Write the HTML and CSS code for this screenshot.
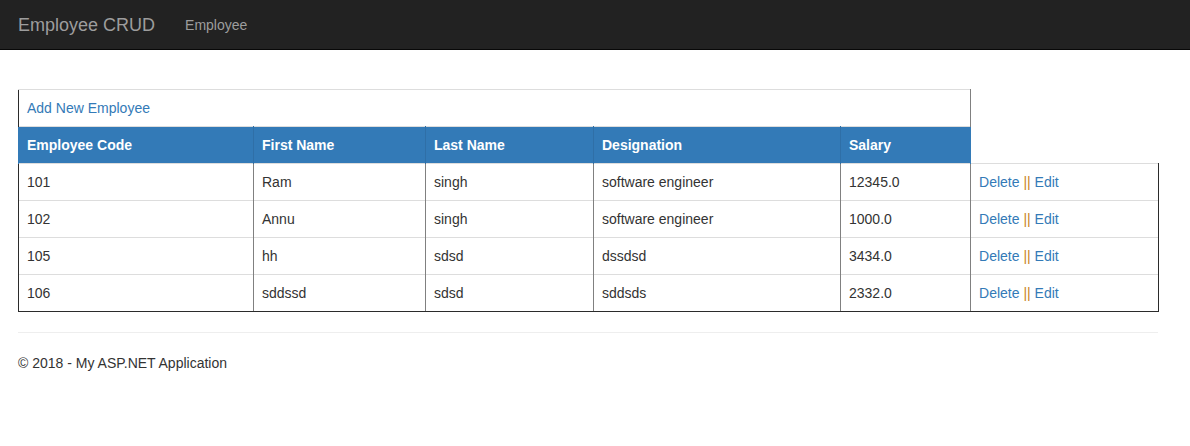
FILE: index.html
```html
<!DOCTYPE html>
<html>
<head>
<meta charset="utf-8">
<title>Employee CRUD</title>
<link rel="stylesheet" href="styles.css">
</head>
<body>
<nav class="navbar">
  <a class="brand" href="#">Employee CRUD</a>
  <a class="nav-link" href="#">Employee</a>
</nav>
<main class="content">
  <table class="grid">
    <colgroup>
      <col class="c1"><col class="c2"><col class="c3"><col class="c4"><col class="c5"><col class="c6">
    </colgroup>
    <tr class="add-row">
      <td colspan="5"><a class="link" href="#">Add New Employee</a></td>
    </tr>
    <tr class="head-row">
      <th>Employee Code</th>
      <th>First Name</th>
      <th>Last Name</th>
      <th>Designation</th>
      <th>Salary</th>
    </tr>
    <tr class="data-row">
      <td>101</td><td>Ram</td><td>singh</td><td>software engineer</td><td>12345.0</td>
      <td class="actions"><a class="link" href="#">Delete</a> <span class="sep">||</span> <a class="link" href="#">Edit</a></td>
    </tr>
    <tr class="data-row">
      <td>102</td><td>Annu</td><td>singh</td><td>software engineer</td><td>1000.0</td>
      <td class="actions"><a class="link" href="#">Delete</a> <span class="sep">||</span> <a class="link" href="#">Edit</a></td>
    </tr>
    <tr class="data-row">
      <td>105</td><td>hh</td><td>sdsd</td><td>dssdsd</td><td>3434.0</td>
      <td class="actions"><a class="link" href="#">Delete</a> <span class="sep">||</span> <a class="link" href="#">Edit</a></td>
    </tr>
    <tr class="data-row last">
      <td>106</td><td>sddssd</td><td>sdsd</td><td>sddsds</td><td>2332.0</td>
      <td class="actions"><a class="link" href="#">Delete</a> <span class="sep">||</span> <a class="link" href="#">Edit</a></td>
    </tr>
  </table>
  <hr class="rule">
  <footer class="footer">© 2018 - My ASP.NET Application</footer>
</main>
</body>
</html>
```
FILE: styles.css
```css
* { box-sizing: border-box; }
body {
  margin: 0;
  font-family: "Liberation Sans", Arial, sans-serif;
  font-size: 14px;
  line-height: 20px;
  color: #333;
  background: #fff;
}
.navbar {
  height: 50px;
  background: #222;
  border-bottom: 1px solid #080808;
  display: flex;
  align-items: center;
  padding-left: 18px;
}
.brand {
  color: #9d9d9d;
  font-size: 18px;
  text-decoration: none;
  line-height: 20px;
}
.nav-link {
  color: #9d9d9d;
  text-decoration: none;
  margin-left: 30px;
  line-height: 20px;
}
.content {
  margin-left: 18px;
  width: 1140px;
  padding-top: 39px;
}
.grid {
  border-collapse: collapse;
  width: 1140px;
  table-layout: fixed;
  margin-bottom: 20px;
}
.c1 { width: 235px; }
.c2 { width: 172px; }
.c3 { width: 168px; }
.c4 { width: 247px; }
.c5 { width: 130px; }
.c6 { width: 188px; }
.grid td, .grid th {
  padding: 8px;
  text-align: left;
  line-height: 20px;
  vertical-align: top;
  white-space: nowrap;
}
.link { color: #337ab7; text-decoration: none; }
.add-row td {
  border-top: 1px solid #ddd;
  border-left: 1px solid #2b2b2b;
  border-right: 1px solid #808080;
}
.head-row th {
  background: #337ab7;
  color: #fff;
  font-weight: bold;
  border-top: 1px solid #ddd;
  border-left: 1px solid #2f6fa7;
  border-right: 1px solid #2f6fa7;
}
.head-row th:first-child { border-left: 1px solid #337ab7; }
.head-row th:last-child { border-right: 1px solid #337ab7; }
.data-row td {
  border-top: 1px solid #ddd;
  border-left: 1px solid #808080;
  border-right: 1px solid #808080;
}
.data-row td:first-child { border-left: 1px solid #2b2b2b; }
.data-row td:last-child { border-right: 1px solid #2b2b2b; }
.data-row.last td { border-bottom: 1px solid #2b2b2b; }
.sep { color: #c9821e; }
.rule {
  margin: 0 0 20px 0;
  border: 0;
  border-top: 1px solid #eee;
  height: 0;
}
.footer { line-height: 20px; }
```
